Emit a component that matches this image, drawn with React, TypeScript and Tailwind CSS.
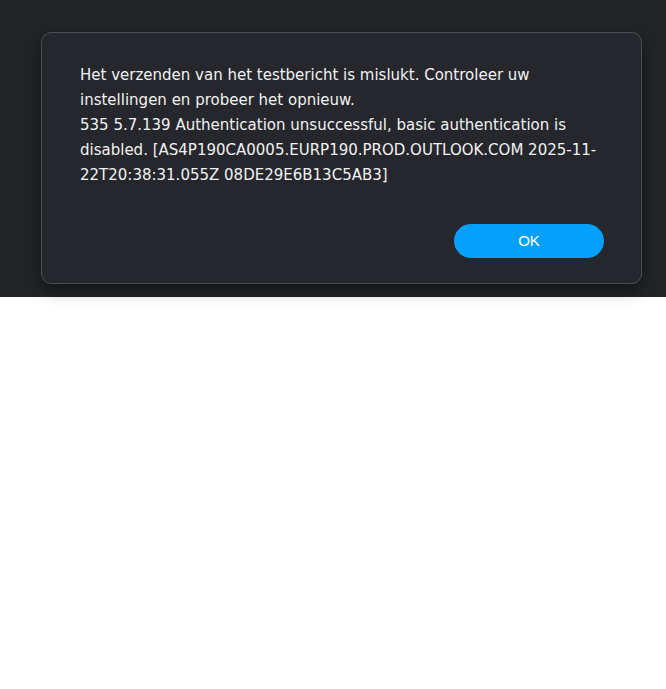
export default function App() {
  return (
    <div className="w-[666px] h-[689px] bg-white">
      <div className="h-[297px] bg-[#222428] pt-[32px] pl-[41px] pr-[24px]">
        <div className="h-[252px] rounded-[10px] border border-[#4a4d52] bg-[#25272c] shadow-[0_6px_16px_rgba(0,0,0,0.45)] pt-[30px] pb-[25px] pl-[38px] pr-[37px] flex flex-col">
          <p className="font-['DejaVu_Sans',Verdana,sans-serif] text-[15px] leading-[25px] text-[#f2f2f2]">
            Het verzenden van het testbericht is mislukt. Controleer uw instellingen en probeer het opnieuw.
            <br />
            535 5.7.139 Authentication unsuccessful, basic authentication is disabled. [AS4P190CA0005.EURP190.PROD.OUTLOOK.COM 2025-11-22T20:38:31.055Z 08DE29E6B13C5AB3]
          </p>
          <div className="mt-auto flex justify-end">
            <button className="w-[150px] h-[34px] rounded-full bg-[#05a0fb] text-white font-['Liberation_Sans',Arial,sans-serif] text-[15px]">
              OK
            </button>
          </div>
        </div>
      </div>
    </div>
  )
}
